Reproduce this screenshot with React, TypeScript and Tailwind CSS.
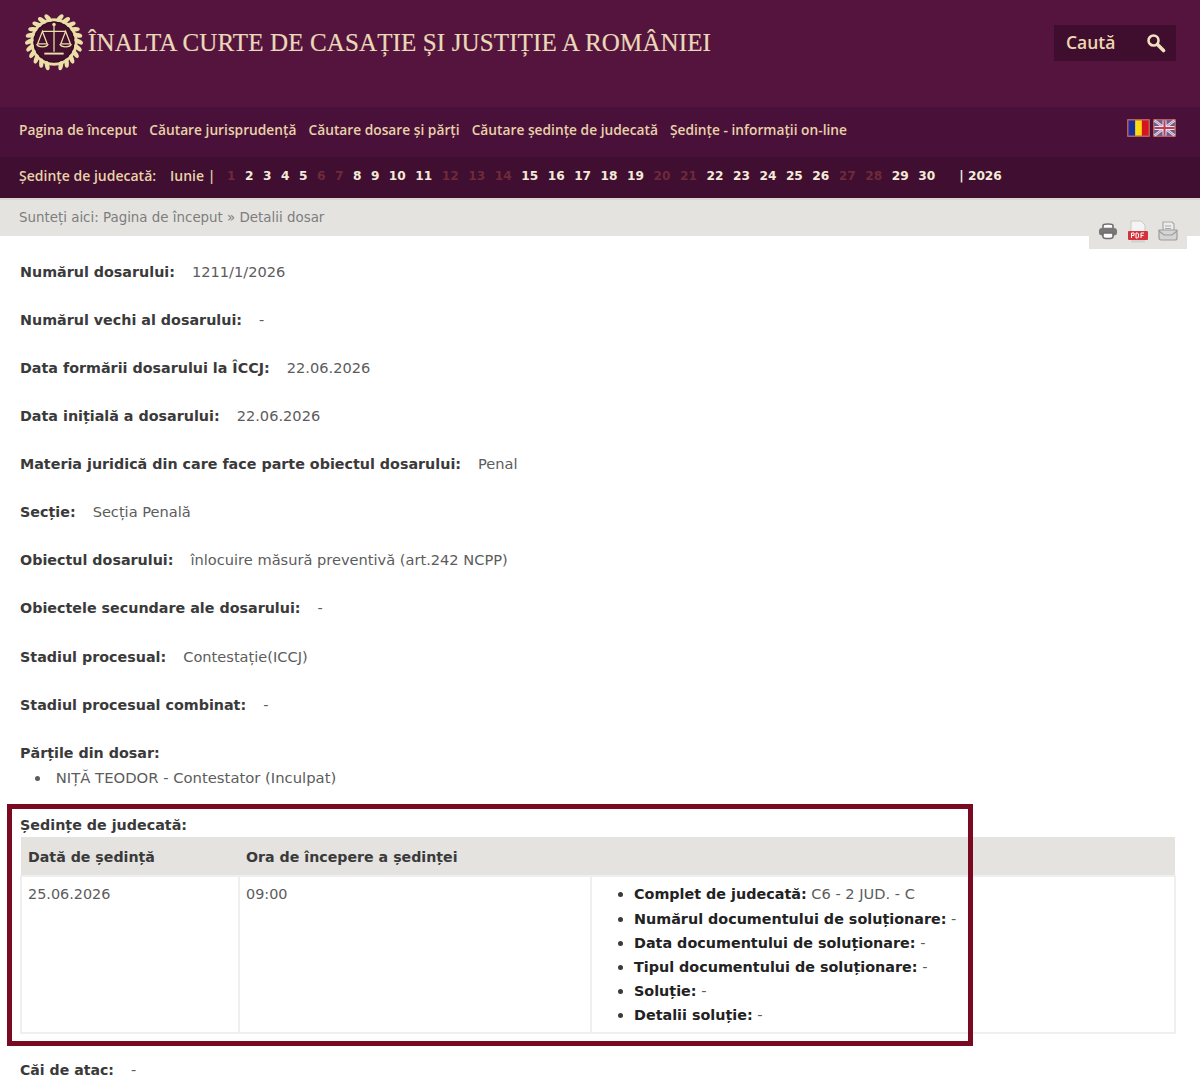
const sans = "font-['DejaVu_Sans',Verdana,sans-serif]";

const navLinks = [
  "Pagina de început",
  "Căutare jurisprudență",
  "Căutare dosare și părți",
  "Căutare ședințe de judecată",
  "Ședințe - informații on-line",
];

const inactiveDays = [1, 6, 7, 12, 13, 14, 20, 21, 27, 28];
const days = Array.from({ length: 30 }, (_, i) => i + 1);

const fields = [
  { label: "Numărul dosarului:", value: "1211/1/2026" },
  { label: "Numărul vechi al dosarului:", value: "-" },
  { label: "Data formării dosarului la ÎCCJ:", value: "22.06.2026" },
  { label: "Data inițială a dosarului:", value: "22.06.2026" },
  { label: "Materia juridică din care face parte obiectul dosarului:", value: "Penal" },
  { label: "Secție:", value: "Secția Penală" },
  { label: "Obiectul dosarului:", value: "înlocuire măsură preventivă (art.242 NCPP)" },
  { label: "Obiectele secundare ale dosarului:", value: "-" },
  { label: "Stadiul procesual:", value: "Contestație(ICCJ)" },
  { label: "Stadiul procesual combinat:", value: "-" },
];

const details = [
  { label: "Complet de judecată:", value: "C6 - 2 JUD. - C" },
  { label: "Numărul documentului de soluționare:", value: "-" },
  { label: "Data documentului de soluționare:", value: "-" },
  { label: "Tipul documentului de soluționare:", value: "-" },
  { label: "Soluție:", value: "-" },
  { label: "Detalii soluție:", value: "-" },
];

function CourtLogo() {
  const leaves = Array.from({ length: 11 }, (_, i) => i);
  return (
    <svg viewBox="0 0 60 60" className="h-[58px] w-[60px] shrink-0" aria-hidden>
      <circle cx="30" cy="30" r="23" fill="none" stroke="#e8dca0" strokeWidth="3" />
      <circle cx="30" cy="30" r="20.500" fill="#45102f" stroke="#2e0a20" strokeWidth="1" />
      {leaves.map((i) => (
        <ellipse
          key={i}
          cx="30"
          cy="4.500"
          rx="2.300"
          ry="4.800"
          fill="#eadfa6"
          transform={`rotate(${i * 15 + 14} 30 30) rotate(28 30 4.500)`}
        />
      ))}
      {leaves.map((i) => (
        <ellipse
          key={i}
          cx="30"
          cy="4.500"
          rx="2.300"
          ry="4.800"
          fill="#eadfa6"
          transform={`rotate(${-(i * 15 + 14)} 30 30) rotate(-28 30 4.500)`}
        />
      ))}
      <g stroke="#eadfa6" strokeWidth="1.300" fill="none">
        <path d="M30 13v27M18 19h24" />
        <path d="M18 19l-5 13h10zM42 19l-5 13h10z" />
        <path d="M12 32c1.500 4 10.500 4 12 0M36 32c1.500 4 10.500 4 12 0" />
        <path d="M20 42h20" strokeWidth="2" />
      </g>
      <circle cx="30" cy="12" r="1.800" fill="#eadfa6" />
    </svg>
  );
}

function SearchGlyph() {
  return (
    <svg viewBox="0 0 20 20" className="h-[20px] w-[20px]" fill="none" stroke="#f0e0c0" aria-hidden>
      <circle cx="7.500" cy="7.500" r="5" strokeWidth="2.600" />
      <path d="M11.500 11.500l6 6" strokeWidth="3.600" strokeLinecap="round" />
    </svg>
  );
}

function FlagRo() {
  return (
    <svg viewBox="0 0 23 18" className="h-[18px] w-[23px]" aria-hidden>
      <rect width="23" height="18" rx="1" fill="#b5605a" />
      <rect x="1.500" y="1.500" width="6.700" height="15" fill="#1a2f9c" />
      <rect x="8.200" y="1.500" width="6.700" height="15" fill="#fbdc10" />
      <rect x="14.900" y="1.500" width="6.600" height="15" fill="#d8141f" />
    </svg>
  );
}

function FlagUk() {
  return (
    <svg viewBox="0 0 23 18" className="h-[18px] w-[23px]" aria-hidden>
      <rect width="23" height="18" rx="1" fill="#b5605a" />
      <rect x="1.500" y="1.500" width="20" height="15" fill="#5a5f9e" />
      <path d="M1.500 1.500l20 15M21.500 1.500l-20 15" stroke="#e8e4ec" strokeWidth="2.500" />
      <path d="M1.500 1.500l20 15M21.500 1.500l-20 15" stroke="#c9607a" strokeWidth="0.800" />
      <path d="M11.500 1.500v15M1.500 9h20" stroke="#e8e4ec" strokeWidth="4" />
      <path d="M11.500 1.500v15M1.500 9h20" stroke="#c43a55" strokeWidth="2" />
    </svg>
  );
}

function PrintIcon() {
  return (
    <svg viewBox="0 0 22 22" className="h-[22px] w-[22px]" aria-hidden>
      <path d="M6 5.500c0-2 10-2 10 0v3H6z" fill="#fff" stroke="#6e6e6e" strokeWidth="1.600" />
      <rect x="2" y="8" width="18" height="7.500" rx="3" fill="#777" />
      <path d="M6 13h10v4c0 2-10 2-10 0z" fill="#fff" stroke="#6e6e6e" strokeWidth="1.600" />
    </svg>
  );
}

function PdfIcon() {
  return (
    <svg viewBox="0 0 22 24" className="h-[24px] w-[22px]" aria-hidden>
      <path d="M4 1h10l4 4v8H4z" fill="#f4f4f4" stroke="#c9c9c9" strokeWidth="1" />
      <rect x="1" y="11" width="20" height="9" rx="1" fill="#d4333d" />
      <rect x="4" y="20" width="14" height="2.500" fill="#d2d2d2" />
      <path d="M4.500 18v-5h2.500v2.500H4.500M9 13v5h1.500l1-1v-3l-1-1zM14 18v-5h3M14 15.500h2.500" fill="none" stroke="#fff" strokeWidth="1" />
    </svg>
  );
}

function SaveIcon() {
  return (
    <svg viewBox="0 0 22 22" className="h-[22px] w-[22px]" aria-hidden>
      <path d="M6 2h9l2 2v7H6z" fill="#ececec" stroke="#a9a9a9" strokeWidth="1.200" />
      <path d="M8 6h6M8 8.500h6" stroke="#a9a9a9" strokeWidth="1" />
      <path d="M2 10h18v8c0 1-1 2-2 2H4c-1 0-2-1-2-2z" fill="#d5d5d5" stroke="#9c9c9c" strokeWidth="1.200" />
      <path d="M2 11l5 4h8l5-4" fill="none" stroke="#9c9c9c" strokeWidth="1.200" />
    </svg>
  );
}

function Field({ label, value }: { label: string; value: string }) {
  return (
    <p className="h-[48.15px] leading-[20px] whitespace-nowrap">
      <strong className="text-[14.300px] font-bold text-[#3a3a3a]">{label}</strong>
      <span className="ml-[17px] text-[14.600px] text-[#5c5c5c]">{value}</span>
    </p>
  );
}

export default function App() {
  return (
    <div className={`relative h-[1080px] overflow-hidden bg-white ${sans}`}>
      <header className="flex h-[107px] items-start justify-between bg-[#54143e] px-[24px]">
        <div className="flex items-center gap-[4px] pt-[13px]">
          <CourtLogo />
          <h1 className="mt-[2px] font-['Liberation_Serif',serif] text-[25px] leading-[30px] tracking-[0.130px] whitespace-nowrap text-[#e9d9b8] [-webkit-text-stroke:0.2px_#e9d9b8]">
            ÎNALTA CURTE DE CASAȚIE ȘI JUSTIȚIE A ROMÂNIEI
          </h1>
        </div>
        <div className="mt-[25px] flex h-[36px] w-[122px] items-center justify-between bg-[#3f0e2e] pr-[10px] pl-[12px]">
          <span className="-mt-[2px] font-['Open_Sans',sans-serif] text-[17.500px] font-semibold text-[#ecd9b0]">Caută</span>
          <SearchGlyph />
        </div>
      </header>

      <nav className="flex h-[50px] justify-between bg-[#49113a] pr-[24px] pl-[19px]">
        <ul className="flex h-[47px] items-center gap-[12px] font-['Open_Sans',sans-serif] text-[13.750px] font-semibold text-[#e8d2a8]">
          {navLinks.map((link) => (
            <li key={link} className="whitespace-nowrap">{link}</li>
          ))}
        </ul>
        <div className="flex gap-[3px] pt-[12px]">
          <FlagRo />
          <FlagUk />
        </div>
      </nav>

      <div className="flex h-[41px] bg-[#3f0e30] pl-[19px] font-['Open_Sans',sans-serif] text-[14px] font-semibold text-[#e8d2a8]">
        <div className="flex h-[37px] items-center">
          <span className="w-[151px] whitespace-nowrap">Ședințe de judecată:</span>
          <span className="w-[57px] whitespace-nowrap">Iunie |</span>
          <ul className="flex gap-[9.500px] pt-[1px] font-['DejaVu_Sans',sans-serif] text-[12.200px] font-bold text-[#f3ead8]">
            {days.map((day) => (
              <li key={day} className={inactiveDays.includes(day) ? "text-[#6e2a38]" : ""}>
                {day}
              </li>
            ))}
          </ul>
          <span className="ml-[24px] pt-[1px] font-['DejaVu_Sans',sans-serif] text-[12.200px] font-bold text-[#f3ead8]">| 2026</span>
        </div>
      </div>

      <div className="flex h-[38px] items-center border-t-2 border-[#d8d6d0] bg-[#e4e3e0] pl-[19px] text-[13.400px] text-[#7d7d7d]">
        Sunteți aici: Pagina de început » Detalii dosar
      </div>

      <div className="absolute top-[218px] right-[13px] flex h-[31px] w-[98px] justify-center gap-[8px] bg-[#e4e3e0] pt-[2px]">
        <PrintIcon />
        <PdfIcon />
        <SaveIcon />
      </div>

      <main className="px-[20px] pt-[25.500px]">
        {fields.map((field) => (
          <Field key={field.label} {...field} />
        ))}

        <h2 className="text-[14.300px] leading-[20px] font-bold text-[#3a3a3a]">Părțile din dosar:</h2>
        <ul className="mt-[5px] ml-[15px] list-inside list-disc text-[14.800px] leading-[20px] text-[#5c5c5c]">
          <li>NIȚĂ TEODOR - Contestator (Inculpat)</li>
        </ul>

        <h2 className="mt-[27px] text-[14.300px] leading-[20px] font-bold text-[#3a3a3a]">Ședințe de judecată:</h2>
        <table className="mt-[2.500px] w-[1156px] table-fixed border-collapse text-[14.400px] text-[#5c5c5c]">
          <thead>
            <tr className="h-[39px] bg-[#e4e3e0] text-left text-[14.200px] text-[#3a3a3a]">
              <th className="w-[218px] pt-[2px] pl-[7px] font-bold">Dată de ședință</th>
              <th className="w-[352px] pt-[2px] pl-[7px] font-bold">Ora de începere a ședinței</th>
              <th />
            </tr>
          </thead>
          <tbody>
            <tr className="h-[157px] align-top">
              <td className="border-2 border-[#efefef] pt-[7px] pl-[6px]">25.06.2026</td>
              <td className="border-2 border-[#efefef] pt-[7px] pl-[6px]">09:00</td>
              <td className="border-2 border-[#efefef] pt-[5px] pl-[42px]">
                <ul className="list-disc text-[14.600px] leading-[24.200px] whitespace-nowrap">
                  {details.map((item) => (
                    <li key={item.label} className="marker:text-[#3a3a3a]">
                      <strong className="text-[14.350px] font-bold text-[#222]">{item.label}</strong> {item.value}
                    </li>
                  ))}
                </ul>
              </td>
            </tr>
          </tbody>
        </table>

        <p className="mt-[26px] leading-[20px]">
          <strong className="text-[14.100px] font-bold text-[#3a3a3a]">Căi de atac:</strong>
          <span className="ml-[17px] text-[14.500px] text-[#5c5c5c]">-</span>
        </p>
      </main>

      <div className="pointer-events-none absolute top-[804px] left-[7px] h-[242px] w-[966px] border-[5px] border-[#7a0a22]" />
    </div>
  );
}
